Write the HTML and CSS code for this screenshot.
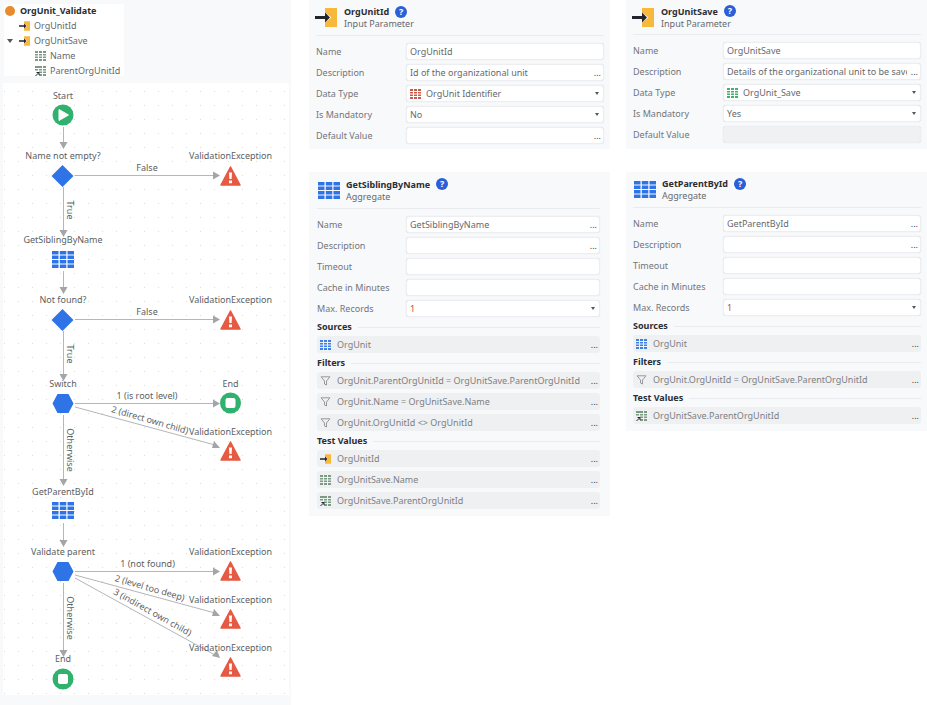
FILE: index.html
```html
<!DOCTYPE html>
<html lang="en">
<head>
    <meta charset="UTF-8">
    <meta name="viewport" content="width=device-width, initial-scale=1.0">
    <title>OrgUnit_Validate</title>
    <link rel="stylesheet" href="styles.css">
</head>
<body>
    <svg class="defs" width="0" height="0">
        <defs>
            <symbol id="i-param" viewBox="0 0 22 19">
                <path d="M10 0h12v19H10v-4.500l6.500-5-6.500-5z" fill="#f6b93b"/>
                <path d="M0 8h10V4.500l5 5-5 5V11H0z" fill="#22252b"/>
            </symbol>
            <symbol id="i-aggregate" viewBox="0 0 22 17">
                <path d="M0 0h6.500v3.500H0zM7.800 0h6.500v3.500H7.800zM15.500 0H22v3.500h-6.500zM0 4.500h6.500V8H0zM7.800 4.500h6.500V8H7.800zM15.500 4.500H22V8h-6.500zM0 9h6.500v3.500H0zM7.800 9h6.500v3.500H7.800zM15.500 9H22v3.500h-6.500zM0 13.500h6.500V17H0zM7.800 13.500h6.500V17H7.800zM15.500 13.500H22V17h-6.500z" fill="#2f74e6"/>
            </symbol>
            <symbol id="i-grid" viewBox="0 0 11 10">
                <path d="M0 0h3v2H0zM4 0h3v2H4zM8 0h3v2H8zM0 3h3v1.500H0zM4 3h3v1.500H4zM8 3h3v1.500H8zM0 5.500h3V7H0zM4 5.500h3V7H4zM8 5.500h3V7H8zM0 8h3v2H0zM4 8h3v2H4zM8 8h3v2H8z" fill="currentColor"/>
            </symbol>
            <symbol id="i-ref" viewBox="0 0 11 10">
                <path d="M3 0h1v2H3zM4 0h3v2H4zM8 0h3v2H8zM4 3h3v1.500H4zM8 3h3v1.500H8zM4 5.500h3V7H4zM8 5.500h3V7H8zM4 8h3v2H4zM8 8h3v2H8zM0 0h3v2H0zM0 3h3v1.500H0z" fill="currentColor"/>
                <path d="M.5 10 3.500 7M1.500 6.500h2.500V9" fill="none" stroke="#22252b" stroke-width="1"/>
            </symbol>
            <symbol id="i-funnel" viewBox="0 0 10 10">
                <path d="M.6.800h8.800L6 5v4L4 8V5z" fill="none" stroke="#8c8f94" stroke-width=".9"/>
            </symbol>
            <symbol id="i-warn" viewBox="0 0 21 20">
                <path d="M10.500 1 20 19H1z" fill="#e55a42" stroke="#e55a42" stroke-width="1.500" stroke-linejoin="round"/>
                <path d="M9 6.500h3l-.4 6.500H9.400zM9 14.500h3v2.800H9z" fill="#fff"/>
            </symbol>
            <pattern id="dots" x="3" y="6" width="14" height="14" patternUnits="userSpaceOnUse">
                <rect x="1" y="1" width="1" height="1" fill="#d9dbdf"/>
            </pattern>
        </defs>
    </svg>

    <div class="left-col">
        <div class="tree">
            <div class="tree-row tree-title"><span class="dot"></span>OrgUnit_Validate</div>
            <div class="tree-row tree-child"><svg class="tree-icon"><use href="#i-param"/></svg>OrgUnitId</div>
            <div class="tree-row tree-child"><span class="expander"></span><svg class="tree-icon"><use href="#i-param"/></svg>OrgUnitSave</div>
            <div class="tree-row tree-leaf"><svg class="tree-icon green-grey"><use href="#i-grid"/></svg>Name</div>
            <div class="tree-row tree-leaf"><svg class="tree-icon green-grey"><use href="#i-ref"/></svg>ParentOrgUnitId</div>
        </div>

        <svg class="canvas" viewBox="3 83 286 612" width="286" height="612">
            <rect x="3" y="83" width="286" height="612" fill="#fff"/>
            <rect x="3" y="83" width="286" height="612" fill="url(#dots)"/>

            <g class="lines">
                <path d="M63.500 127v15M63.500 187v43M63.500 271v16M63.500 331v43M63.500 415v64M63.500 523v17M63.500 583v67"/>
                <path d="M75 175.500h139M75 319.500h139M75 403.500h139M75 571.500h139"/>
                <path d="M75 407l140 38M75 575l140 38M75 578l140 77"/>
            </g>
            <g class="heads">
                <path d="M59.500 142h8l-4 7zM59.500 230h8l-4 7zM59.500 287h8l-4 7zM59.500 374h8l-4 7zM59.500 479h8l-4 7zM59.500 540h8l-4 7zM59.500 650h8l-4 7z"/>
                <path d="M213 171.500v8l7-4zM213 315.500v8l7-4zM213 399.500v8l7-4zM213 567.500v8l7-4z"/>
                <path d="M214 441l-2 7 8 0zM214 609l-2 7 8 0zM212 656l5-6 3 8z"/>
            </g>

            <circle cx="63" cy="115" r="10.500" fill="#30b26e"/>
            <path d="M59 109.500l9.500 5.500-9.500 5.500z" fill="#fff" stroke="#fff" stroke-linejoin="round"/>
            <path d="M62.500 165l11 11-11 11-11-11zM62.500 309l11 11-11 11-11-11z" fill="#2f74e6"/>
            <path d="M57.500 394h11l5 9.500-5 9.500h-11l-5-9.500zM57.500 562h11l5 9.500-5 9.500h-11l-5-9.500z" fill="#2f74e6"/>
            <use href="#i-aggregate" x="52" y="251" width="22" height="17"/>
            <use href="#i-aggregate" x="52" y="502" width="22" height="17"/>

            <circle cx="230.500" cy="403" r="10.500" fill="#30b26e"/>
            <rect x="225.500" y="398" width="10" height="10" rx="2" fill="#fff"/>
            <circle cx="63" cy="679" r="10.500" fill="#30b26e"/>
            <rect x="58" y="674" width="10" height="10" rx="2" fill="#fff"/>

            <use href="#i-warn" x="220" y="166" width="21" height="20"/>
            <use href="#i-warn" x="220" y="310" width="21" height="20"/>
            <use href="#i-warn" x="220" y="441" width="21" height="20"/>
            <use href="#i-warn" x="220" y="561" width="21" height="20"/>
            <use href="#i-warn" x="220" y="609" width="21" height="20"/>
            <use href="#i-warn" x="220" y="657" width="21" height="20"/>

            <g class="labels">
                <text x="63" y="99">Start</text>
                <text x="63" y="159">Name not empty?</text>
                <text x="63" y="243">GetSiblingByName</text>
                <text x="63" y="303">Not found?</text>
                <text x="63" y="387">Switch</text>
                <text x="63" y="495">GetParentById</text>
                <text x="63" y="555">Validate parent</text>
                <text x="63" y="662">End</text>
                <text x="230.500" y="387">End</text>
                <text x="230.500" y="159">ValidationException</text>
                <text x="230.500" y="303">ValidationException</text>
                <text x="230.500" y="435">ValidationException</text>
                <text x="230.500" y="555">ValidationException</text>
                <text x="230.500" y="603">ValidationException</text>
                <text x="230.500" y="651">ValidationException</text>
                <text x="147" y="171">False</text>
                <text x="147" y="315">False</text>
                <text x="147" y="399">1 (is root level)</text>
                <text x="147.500" y="567">1 (not found)</text>
                <text transform="translate(149 423) rotate(16)">2 (direct own child)</text>
                <text transform="translate(149 591) rotate(16)">2 (level too deep)</text>
                <text transform="translate(151 615) rotate(29)">3 (indirect own child)</text>
                <text transform="translate(67 210) rotate(90)">True</text>
                <text transform="translate(67 354) rotate(90)">True</text>
                <text transform="translate(67 450) rotate(90)">Otherwise</text>
                <text transform="translate(67 618) rotate(90)">Otherwise</text>
            </g>
        </svg>
    </div>

    <div class="props-col props-col-a">
        <section class="panel panel-param">
            <header class="panel-head">
                <svg class="head-icon"><use href="#i-param"/></svg>
                <div>
                    <div class="panel-title">OrgUnitId <span class="help">?</span></div>
                    <div class="panel-sub">Input Parameter</div>
                </div>
            </header>
            <div class="row"><span class="row-label">Name</span><div class="field">OrgUnitId</div></div>
            <div class="row"><span class="row-label">Description</span><div class="field more"><span class="field-text">Id of the organizational unit</span></div></div>
            <div class="row"><span class="row-label">Data Type</span><div class="field caret"><svg class="type-icon red"><use href="#i-grid"/></svg>OrgUnit Identifier</div></div>
            <div class="row"><span class="row-label">Is Mandatory</span><div class="field caret">No</div></div>
            <div class="row"><span class="row-label">Default Value</span><div class="field more"></div></div>
        </section>

        <section class="panel panel-agg">
            <header class="panel-head">
                <svg class="head-icon agg-icon"><use href="#i-aggregate"/></svg>
                <div>
                    <div class="panel-title">GetSiblingByName <span class="help">?</span></div>
                    <div class="panel-sub">Aggregate</div>
                </div>
            </header>
            <div class="row"><span class="row-label">Name</span><div class="field more">GetSiblingByName</div></div>
            <div class="row"><span class="row-label">Description</span><div class="field more"></div></div>
            <div class="row"><span class="row-label">Timeout</span><div class="field"></div></div>
            <div class="row"><span class="row-label">Cache in Minutes</span><div class="field"></div></div>
            <div class="row"><span class="row-label">Max. Records</span><div class="field caret number">1</div></div>
            <div class="group-title">Sources</div>
            <div class="item"><svg class="item-icon blue"><use href="#i-grid"/></svg>OrgUnit</div>
            <div class="group-title">Filters</div>
            <div class="item"><svg class="item-icon"><use href="#i-funnel"/></svg>OrgUnit.ParentOrgUnitId = OrgUnitSave.ParentOrgUnitId</div>
            <div class="item"><svg class="item-icon"><use href="#i-funnel"/></svg>OrgUnit.Name = OrgUnitSave.Name</div>
            <div class="item"><svg class="item-icon"><use href="#i-funnel"/></svg>OrgUnit.OrgUnitId &lt;&gt; OrgUnitId</div>
            <div class="group-title">Test Values</div>
            <div class="item"><svg class="item-icon"><use href="#i-param"/></svg>OrgUnitId</div>
            <div class="item"><svg class="item-icon green-grey"><use href="#i-grid"/></svg>OrgUnitSave.Name</div>
            <div class="item"><svg class="item-icon green-grey"><use href="#i-ref"/></svg>OrgUnitSave.ParentOrgUnitId</div>
        </section>
    </div>

    <div class="props-col props-col-b">
        <section class="panel panel-param">
            <header class="panel-head">
                <svg class="head-icon"><use href="#i-param"/></svg>
                <div>
                    <div class="panel-title">OrgUnitSave <span class="help">?</span></div>
                    <div class="panel-sub">Input Parameter</div>
                </div>
            </header>
            <div class="row"><span class="row-label">Name</span><div class="field">OrgUnitSave</div></div>
            <div class="row"><span class="row-label">Description</span><div class="field more"><span class="field-text">Details of the organizational unit to be saved</span></div></div>
            <div class="row"><span class="row-label">Data Type</span><div class="field caret"><svg class="type-icon green"><use href="#i-grid"/></svg>OrgUnit_Save</div></div>
            <div class="row"><span class="row-label">Is Mandatory</span><div class="field caret">Yes</div></div>
            <div class="row"><span class="row-label">Default Value</span><div class="field disabled"></div></div>
        </section>

        <section class="panel panel-agg">
            <header class="panel-head">
                <svg class="head-icon agg-icon"><use href="#i-aggregate"/></svg>
                <div>
                    <div class="panel-title">GetParentById <span class="help">?</span></div>
                    <div class="panel-sub">Aggregate</div>
                </div>
            </header>
            <div class="row"><span class="row-label">Name</span><div class="field more">GetParentById</div></div>
            <div class="row"><span class="row-label">Description</span><div class="field more"></div></div>
            <div class="row"><span class="row-label">Timeout</span><div class="field"></div></div>
            <div class="row"><span class="row-label">Cache in Minutes</span><div class="field"></div></div>
            <div class="row"><span class="row-label">Max. Records</span><div class="field caret number">1</div></div>
            <div class="group-title">Sources</div>
            <div class="item"><svg class="item-icon blue"><use href="#i-grid"/></svg>OrgUnit</div>
            <div class="group-title">Filters</div>
            <div class="item"><svg class="item-icon"><use href="#i-funnel"/></svg>OrgUnit.OrgUnitId = OrgUnitSave.ParentOrgUnitId</div>
            <div class="group-title">Test Values</div>
            <div class="item"><svg class="item-icon green-grey"><use href="#i-ref"/></svg>OrgUnitSave.ParentOrgUnitId</div>
        </section>
    </div>
</body>
</html>
```

FILE: styles.css
```css
body {
    font-family: "Noto Sans", "Open Sans", sans-serif;
    font-size: 9px;
    line-height: 15px;
    color: #66696d;
    margin: 0;
    padding: 0;
    background-color: #fff;
    display: flex;
    height: 705px;
    overflow: hidden;
}

.defs {
    position: absolute;
}

/* left column: tree and flow */

.left-col {
    width: 291px;
    height: 705px;
    box-sizing: border-box;
    padding: 4px 2px 0 3px;
    background-color: #f8f9fb;
    flex-shrink: 0;
}

.tree {
    display: flow-root;
    width: 120px;
    height: 72px;
    box-sizing: border-box;
    margin-left: 1px;
    margin-bottom: 7px;
    background-color: #fff;
}

.tree-row {
    display: flex;
    align-items: center;
    height: 15px;
    white-space: nowrap;
}

.tree-title {
    font-weight: 700;
    color: #2b2d31;
    padding-left: 1px;
    margin-top: -1px;
}

.dot {
    width: 10px;
    height: 10px;
    border-radius: 50%;
    background-color: #e88a2e;
    margin-right: 5px;
}

.tree-child {
    padding-left: 15px;
    position: relative;
}

.tree-leaf {
    padding-left: 31px;
}

.tree-icon {
    width: 11px;
    height: 10px;
    margin-right: 4px;
}

.expander {
    position: absolute;
    left: 3px;
    top: 6px;
    border-left: 3px solid transparent;
    border-right: 3px solid transparent;
    border-top: 4px solid #555;
}

.canvas {
    display: block;
    font-size: 9px;
}

.lines path {
    fill: none;
    stroke: #b4b6ba;
    stroke-width: 1;
}

.heads path {
    fill: #a3a5a9;
}

.labels text {
    fill: #5c5f63;
    text-anchor: middle;
}

/* property panels */

.props-col {
    width: 301px;
    flex-shrink: 0;
}

.props-col-a {
    margin-left: 18px;
}

.props-col-b {
    margin-left: 16px;
}

.panel {
    background-color: #f8f9fb;
    box-sizing: border-box;
}

.panel-param {
    height: 149px;
    padding: 0 6px 0 7px;
}

.panel-agg {
    margin-top: 23px;
    padding: 0 10px 3px 8px;
}

.props-col-b .panel-agg {
    padding: 0 6px 3px 7px;
}

.panel-head {
    display: flex;
    align-items: center;
    height: 36px;
    box-sizing: border-box;
    border-bottom: 1px solid #e9ebef;
    margin-bottom: 7px;
}

.props-col-b .panel-param .panel-head {
    height: 35px;
}

.panel-agg .panel-head {
    height: 37px;
}

.props-col-b .panel-agg .panel-head {
    height: 36px;
}

.head-icon {
    width: 22px;
    height: 19px;
    margin-left: -1px;
    margin-right: 7px;
    flex-shrink: 0;
}

.agg-icon {
    height: 17px;
    margin-left: 1px;
    margin-right: 6px;
}

.panel-title {
    font-weight: 700;
    color: #2b2d31;
    line-height: 13px;
    display: flex;
    align-items: center;
    gap: 6px;
}

.panel-sub {
    line-height: 12px;
}

.help {
    width: 12px;
    height: 12px;
    border-radius: 50%;
    background-color: #2a5fd8;
    color: #fff;
    font-size: 9px;
    line-height: 12px;
    text-align: center;
}

.row {
    display: flex;
    align-items: center;
    height: 17px;
    margin-bottom: 4px;
}

.row-label {
    width: 90px;
    flex-shrink: 0;
    color: #72757a;
}

.panel-agg .row-label {
    width: 89px;
}

.props-col-b .panel-agg .row-label {
    width: 90px;
}

.field {
    flex: 1;
    min-width: 0;
    height: 17px;
    box-sizing: border-box;
    padding: 0 3px;
    display: flex;
    align-items: center;
    background-color: #fff;
    border: 1px solid #eceef1;
    border-radius: 3px;
    box-shadow: 0 0 1px rgba(0, 0, 0, 0.15);
    position: relative;
    white-space: nowrap;
}

.field-text {
    overflow: hidden;
    margin-right: 10px;
}

.field.more::after {
    content: "...";
    position: absolute;
    right: 2px;
    top: 0;
    font-size: 9px;
    color: #444;
}

.field.caret::after {
    content: "";
    position: absolute;
    right: 4px;
    top: 6px;
    border-left: 2px solid transparent;
    border-right: 2px solid transparent;
    border-top: 3px solid #555;
}

.field.disabled {
    background-color: #f0f1f3;
}

.number {
    color: #c0503a;
}

.type-icon {
    width: 11px;
    height: 10px;
    margin-right: 5px;
}

.red {
    color: #c9584a;
}

.green {
    color: #3fb36b;
}

.green-grey {
    color: #7d9a85;
}

.blue {
    color: #3f80e6;
}

.group-title {
    font-weight: 700;
    color: #2b2d31;
    height: 15px;
    box-sizing: border-box;
    padding-bottom: 3px;
    line-height: 12px;
    display: flex;
    align-items: center;
    gap: 6px;
}

.group-title::after {
    content: "";
    flex: 1;
    height: 1px;
    background-color: #e9ebef;
}

.item {
    display: flex;
    align-items: center;
    height: 17px;
    margin-bottom: 4px;
    padding: 0 3px;
    background-color: #eff0f2;
    border-radius: 3px;
    color: #7d8084;
    position: relative;
    white-space: nowrap;
}

.item::after {
    content: "...";
    position: absolute;
    right: 2px;
    top: 1px;
    font-size: 9px;
    color: #444;
}

.item-icon {
    width: 11px;
    height: 10px;
    margin-right: 6px;
}
```
